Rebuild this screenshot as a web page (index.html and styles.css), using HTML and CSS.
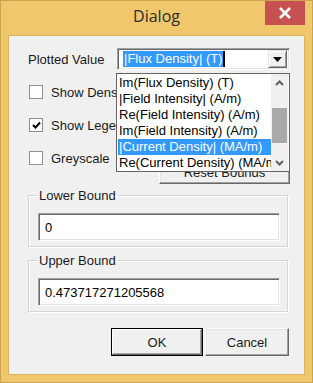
FILE: index.html
```html
<!DOCTYPE html>
<html lang="en">
<head>
    <meta charset="UTF-8">
    <meta name="viewport" content="width=device-width, initial-scale=1.0">
    <title>Dialog</title>
    <link rel="stylesheet" href="styles.css">
</head>
<body>
    <div class="window">
        <div class="titlebar">
            <span></span>
            <span class="title">Dialog</span>
            <span class="close-btn">
                <svg width="14" height="12" viewBox="0 0 14 12">
                    <path d="M2 1 L12 11 M12 1 L2 11" stroke="#fff" stroke-width="2.6"/>
                </svg>
            </span>
        </div>
        <div class="client">
            <div class="row-plot">
                <span class="label">Plotted Value</span>
                <div class="combo">
                    <span class="combo-text"><span class="sel">|Flux Density| (T)</span><span class="caret"></span></span>
                    <span class="combo-btn">
                        <svg width="9" height="5" viewBox="0 0 9 5"><path d="M0 0 H9 L4.5 5 Z" fill="#000"/></svg>
                    </span>
                    <div class="popup">
                        <div class="items">
                            <div class="item">Im(Flux Density) (T)</div>
                            <div class="item">|Field Intensity| (A/m)</div>
                            <div class="item">Re(Field Intensity) (A/m)</div>
                            <div class="item">Im(Field Intensity) (A/m)</div>
                            <div class="item active">|Current Density| (MA/m)</div>
                            <div class="item">Re(Current Density) (MA/m)</div>
                        </div>
                        <div class="scrollbar">
                            <span class="arrow">
                                <svg width="9" height="6" viewBox="0 0 9 6"><path d="M1 5 L4.5 1.5 L8 5" stroke="#606060" stroke-width="2" fill="none"/></svg>
                            </span>
                            <div class="track"><div class="thumb"></div></div>
                            <span class="arrow">
                                <svg width="9" height="6" viewBox="0 0 9 6"><path d="M1 1 L4.5 4.5 L8 1" stroke="#606060" stroke-width="2" fill="none"/></svg>
                            </span>
                        </div>
                    </div>
                </div>
            </div>

            <div class="options">
                <div class="checks">
                    <label class="check"><span class="box"></span>Show Density Plot</label>
                    <label class="check"><span class="box">
                        <svg width="9" height="9" viewBox="0 0 9 9"><path d="M1 4 L3.5 6.5 L8 1.5" stroke="#000" stroke-width="2" fill="none"/></svg>
                    </span>Show Legend</label>
                    <label class="check"><span class="box"></span>Greyscale</label>
                </div>
                <button class="btn reset">Reset Bounds</button>
            </div>

            <fieldset class="group">
                <legend>Lower Bound</legend>
                <div class="field">0</div>
            </fieldset>

            <fieldset class="group">
                <legend>Upper Bound</legend>
                <div class="field">0.473717271205568</div>
            </fieldset>

            <div class="actions">
                <button class="btn ok">OK</button>
                <button class="btn cancel">Cancel</button>
            </div>
        </div>
    </div>
</body>
</html>
```

FILE: styles.css
```css
html, body {
    margin: 0;
    padding: 0;
}
body {
    width: 313px;
    height: 383px;
    overflow: hidden;
    font-family: "Liberation Sans", Arial, sans-serif;
    font-size: 13px;
    color: #1a1a1a;
}
.window {
    box-sizing: border-box;
    width: 313px;
    height: 383px;
    background: #f0c86b;
    border: 1px solid #c9a552;
    display: flex;
    flex-direction: column;
}
.titlebar {
    height: 34px;
    display: grid;
    grid-template-columns: 1fr auto 1fr;
    align-items: start;
    padding: 0 7px;
}
.title {
    font-family: "Open Sans", "Noto Sans", sans-serif;
    font-size: 16px;
    color: #2b2b2b;
    padding-top: 4px;
}
.close-btn {
    justify-self: end;
    width: 40px;
    height: 24px;
    background: #c75050;
    display: flex;
    align-items: center;
    justify-content: center;
}
.client {
    flex: 1;
    margin: 0 7px 7px 7px;
    background: #f0f0f0;
    border: 1px solid #d9b35d;
    padding: 12px 14px 0 19px;
    box-sizing: border-box;
}
.row-plot {
    display: flex;
    justify-content: space-between;
    align-items: center;
    height: 22px;
}
.combo {
    position: relative;
    box-sizing: border-box;
    width: 173px;
    height: 22px;
    background: #fff;
    border: 1px solid;
    border-color: #a0a0a0 #fff #fff #a0a0a0;
    box-shadow: inset 1px 1px #696969, inset -1px -1px #e3e3e3;
    display: flex;
    align-items: center;
    justify-content: space-between;
    padding: 2px 2px 2px 5px;
}
.combo-text {
    display: flex;
    align-items: center;
    height: 16px;
}
.sel {
    background: #3399ff;
    color: #fff;
    line-height: 16px;
    padding: 0 1px;
}
.caret {
    width: 2px;
    height: 16px;
    background: #000;
}
.combo-btn {
    box-sizing: border-box;
    width: 19px;
    height: 18px;
    background: #f0f0f0;
    border: 1px solid;
    border-color: #e3e3e3 #696969 #696969 #e3e3e3;
    box-shadow: inset 1px 1px #fff, inset -1px -1px #a0a0a0;
    display: flex;
    align-items: center;
    justify-content: center;
}
.popup {
    position: absolute;
    left: -2px;
    top: 24px;
    width: 174px;
    height: 99px;
    box-sizing: border-box;
    background: #fff;
    border: 1px solid #646464;
    display: flex;
    padding: 1px 1px 0 1px;
    z-index: 2;
}
.items {
    width: 153px;
    overflow: hidden;
}
.item {
    height: 16px;
    line-height: 16px;
    white-space: nowrap;
    padding-left: 1px;
    color: #000;
}
.item.active {
    background: #3399ff;
    color: #fff;
}
.scrollbar {
    flex: 1;
    display: flex;
    flex-direction: column;
    background: #f0f0f0;
    margin-top: -1px;
}
.arrow {
    height: 17px;
    display: flex;
    align-items: center;
    justify-content: center;
}
.track {
    flex: 1;
    padding-top: 17px;
}
.thumb {
    height: 35px;
    background: #a9a9a9;
    margin: 0 1px;
}
.options {
    display: flex;
    justify-content: space-between;
    align-items: flex-end;
    margin-top: 15px;
}
.checks {
    display: flex;
    flex-direction: column;
    gap: 19px;
    padding-left: 1px;
    padding-bottom: 19px;
}
.check {
    display: flex;
    align-items: center;
    height: 14px;
    gap: 8px;
    white-space: nowrap;
}
.box {
    box-sizing: border-box;
    width: 14px;
    height: 14px;
    background: #fff;
    border: 1px solid #8e8f8f;
    display: flex;
    align-items: center;
    justify-content: center;
}
.btn {
    font-family: "Liberation Sans", Arial, sans-serif;
    font-size: 13px;
    color: #1a1a1a;
    background: #f0f0f0;
    box-sizing: border-box;
    border: 1px solid;
    border-color: #fff #696969 #696969 #fff;
    box-shadow: inset -1px -1px #a0a0a0, inset 1px 1px #e3e3e3;
    padding: 0;
}
.reset {
    width: 131px;
    height: 24px;
}
.group {
    margin: 4px 2px 0 0;
    padding: 0 7px 5px 9px;
    border: 1px solid #d5d5d5;
    box-shadow: 1px 1px #fff, inset 1px 1px #fff;
    min-width: 0;
}
.group legend {
    padding: 0 2px;
    margin-left: -1px;
}
.group + .group {
    margin-top: 6px;
}
.field {
    box-sizing: border-box;
    height: 28px;
    background: #fff;
    border: 1px solid;
    border-color: #a0a0a0 #fff #fff #a0a0a0;
    box-shadow: inset 1px 1px #696969, inset -1px -1px #e3e3e3;
    padding: 0 6px;
    display: flex;
    align-items: center;
    margin-top: 10px;
    color: #000;
}
.actions {
    display: flex;
    justify-content: flex-end;
    gap: 2px;
    margin-top: 16px;
    padding-right: 1px;
}
.ok {
    width: 92px;
    height: 28px;
    border-color: #000;
    box-shadow: inset -1px -1px #696969, inset 1px 1px #fff, inset -2px -2px #a0a0a0;
}
.cancel {
    width: 84px;
    height: 28px;
}
```
